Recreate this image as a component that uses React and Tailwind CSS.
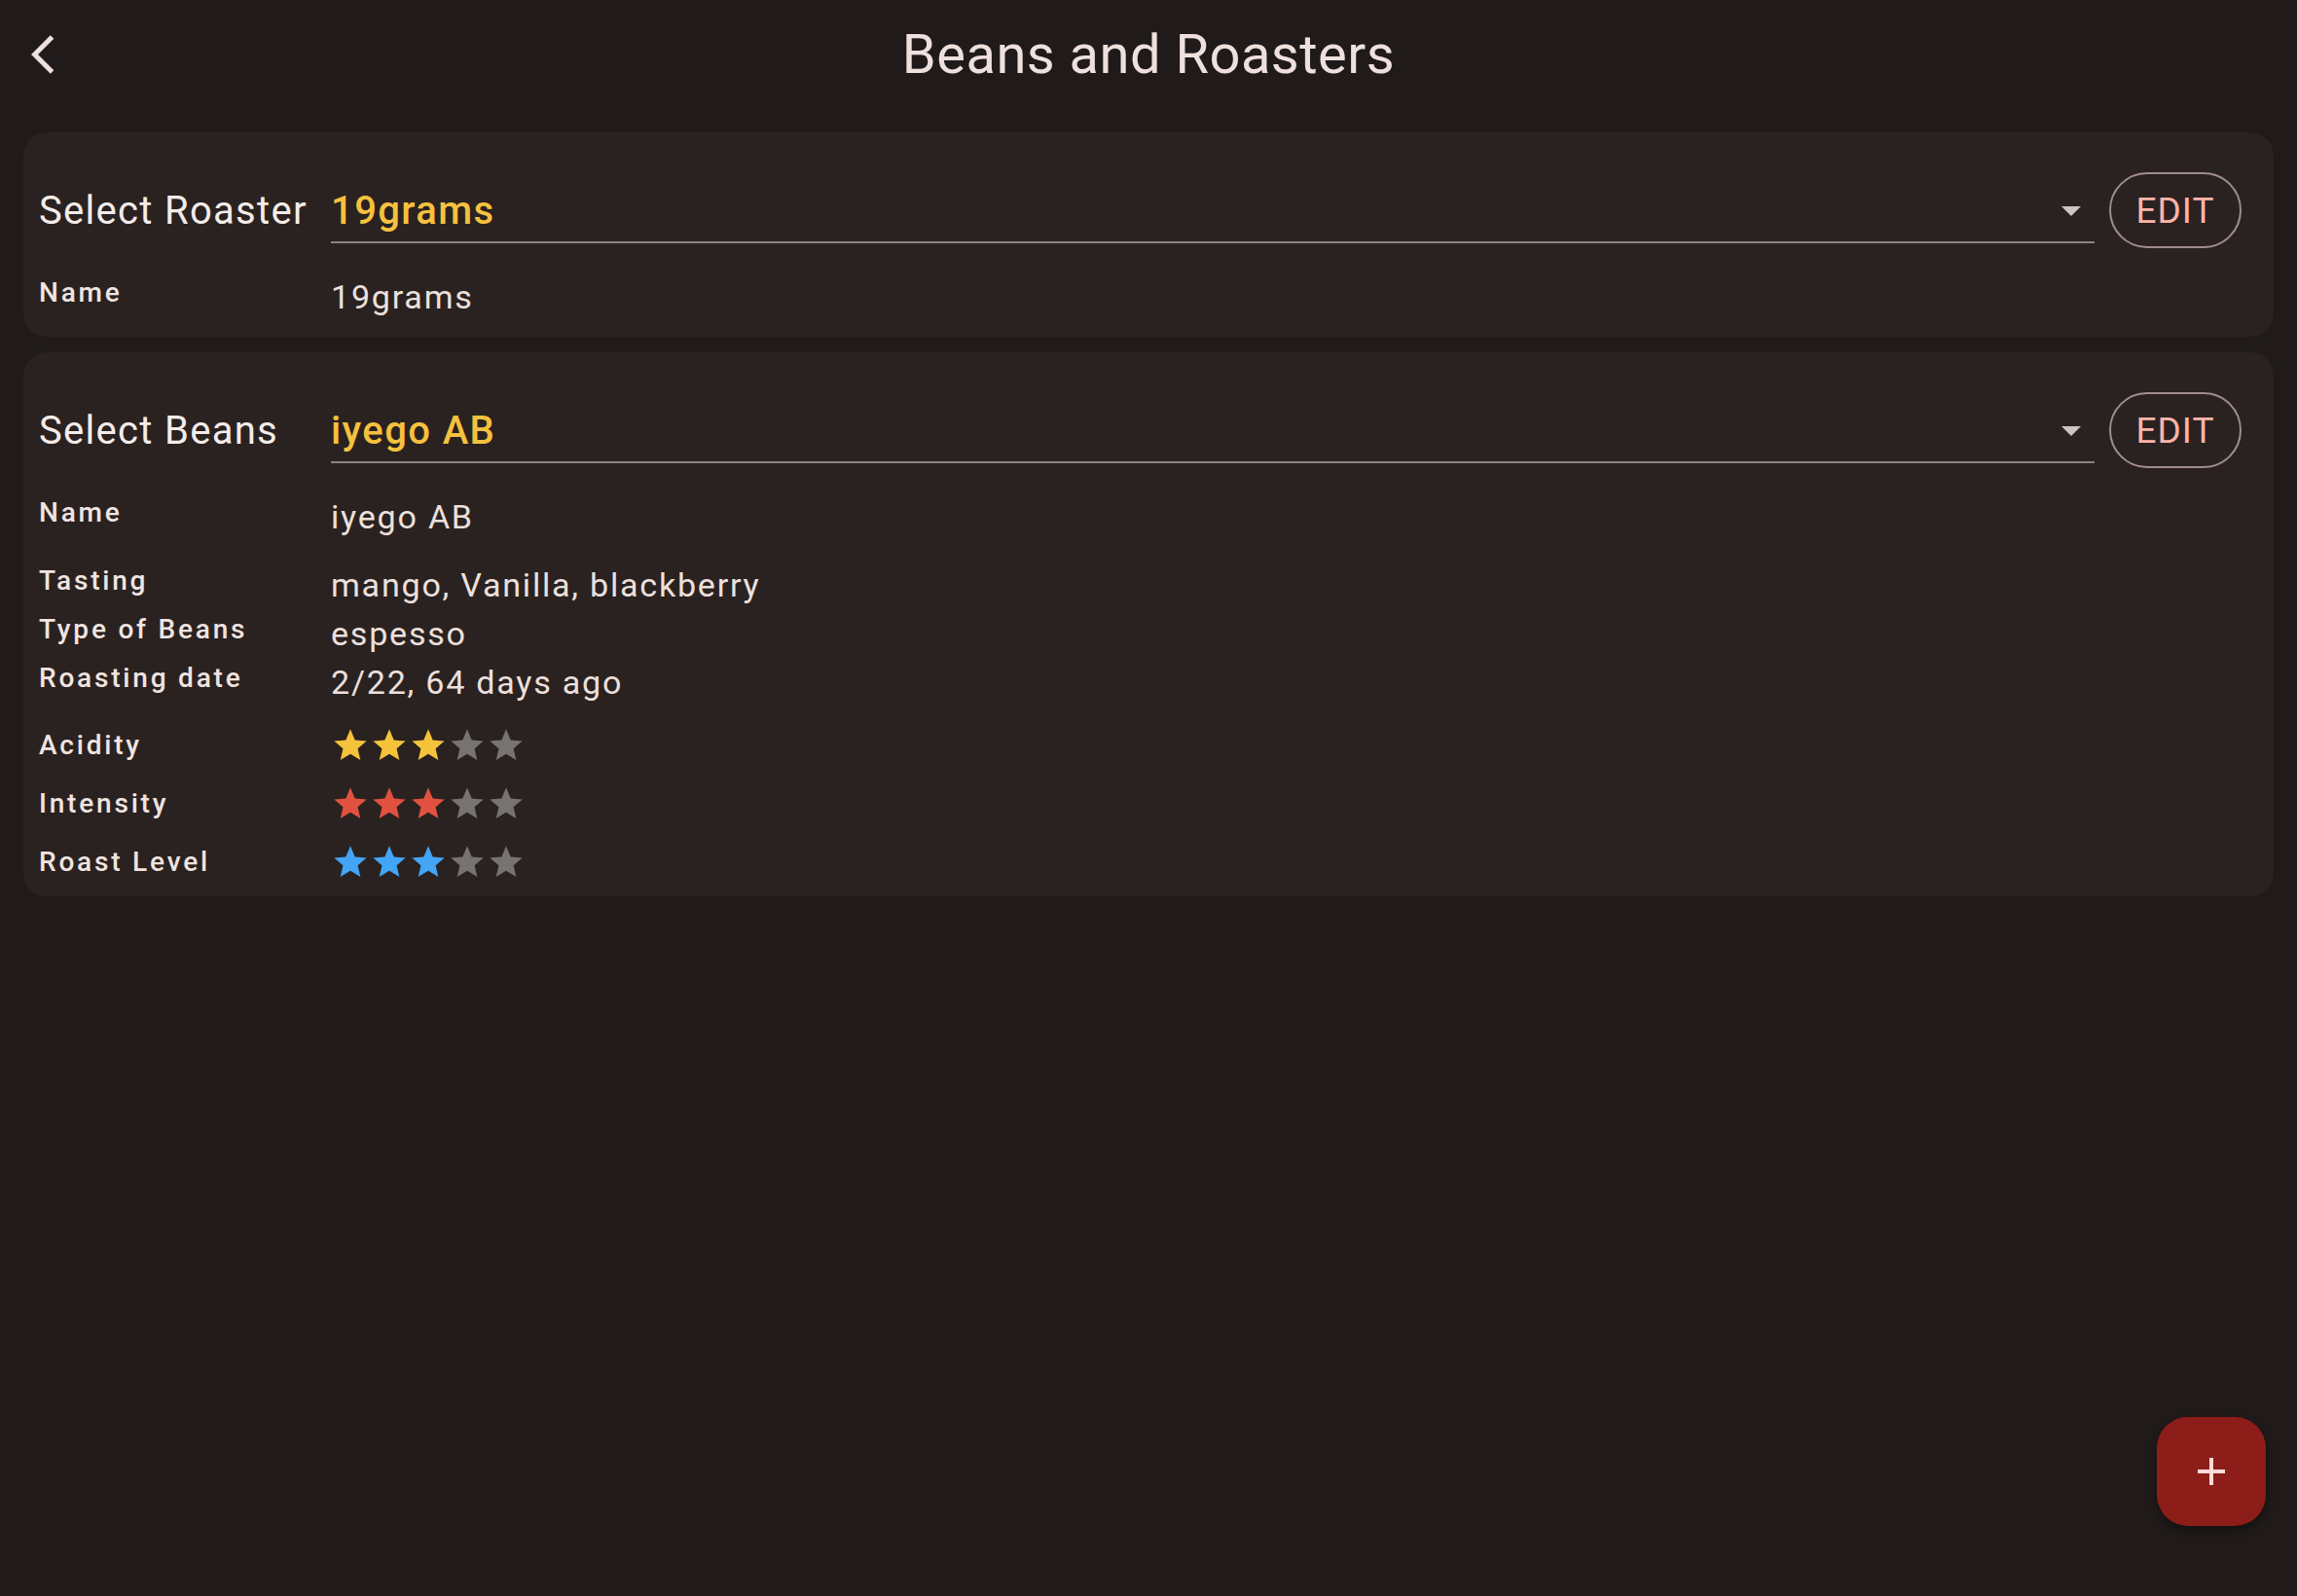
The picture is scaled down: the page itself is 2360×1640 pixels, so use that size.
import React from "react";

const STAR = "M12 17.27L18.18 21l-1.64-7.03L22 9.24l-7.19-.61L12 2 9.19 8.63 2 9.24l5.46 4.73L5.82 21z";

function Stars({ value, color }) {
  return (
    <div className="flex">
      {[0, 1, 2, 3, 4].map((i) => (
        <svg key={i} viewBox="0 0 24 24" className="w-[40px] h-[40px]" fill={i < value ? color : "#777372"}>
          <path d={STAR} />
        </svg>
      ))}
    </div>
  );
}

function SelectRow({ label, value }) {
  return (
    <div className="flex h-[78px]">
      <div className="w-[300px] shrink-0 flex items-center pt-[2px] text-[40px] tracking-[1.3px] text-[#f4ecea]">{label}</div>
      <div className="flex-1 h-[73px] pt-[9px] border-b-2 border-[#8a8482] flex items-center">
        <span className="flex-1 text-[40px] font-medium tracking-[1.4px] text-[#f5c13f]">{value}</span>
        <svg viewBox="0 0 24 24" className="w-[48px] h-[48px] -mt-[3px]" fill="#cbc5c3">
          <path d="M7 10l5 5 5-5z" />
        </svg>
      </div>
      <button className="ml-[15px] w-[136px] h-[78px] shrink-0 rounded-full border-2 border-[#a08d8a] pt-[2px] text-[37px] tracking-[1px] text-[#ffb4a9] flex items-center justify-center">
        EDIT
      </button>
    </div>
  );
}

function TextRow({ label, value }) {
  return (
    <div className="flex h-[50px] items-start">
      <div className="w-[300px] shrink-0 text-[28px] font-medium tracking-[2.8px] leading-[42px] text-[#f0e4e1]">{label}</div>
      <div className="text-[34px] tracking-[1.8px] leading-[50px] text-[#ede0dd]">{value}</div>
    </div>
  );
}

function StarRow({ label, value, color }) {
  return (
    <div className="flex h-[60px] items-center">
      <div className="w-[300px] shrink-0 text-[28px] font-medium tracking-[2.8px] text-[#f0e4e1]">{label}</div>
      <Stars value={value} color={color} />
    </div>
  );
}

export default function App() {
  return (
    <div className="relative min-h-screen bg-[#201a1a] font-['Roboto','Liberation_Sans',sans-serif]">
      <header className="grid grid-cols-[1fr_auto_1fr] items-center h-[112px]">
        <div className="pl-[32px] flex items-center">
          <svg viewBox="0 0 24 24" className="w-[48px] h-[48px]" fill="#ede0dd">
            <path d="M11.67 3.87 9.9 2.1 0 12l9.9 9.9 1.77-1.77L3.54 12z" />
          </svg>
        </div>
        <h1 className="text-[56px] leading-none tracking-[0.5px] text-[#ede0dd]">Beans and Roasters</h1>
        <div />
      </header>

      <main className="px-[24px] pt-[24px] flex flex-col gap-[16px]">
        <section className="bg-[#2a2220] rounded-3xl pl-[16px] pr-[33px] pt-[41px] pb-[16px]">
          <SelectRow label="Select Roaster" value="19grams" />
          <div className="mt-[25px]">
            <TextRow label="Name" value="19grams" />
          </div>
        </section>

        <section className="bg-[#2a2220] rounded-3xl pl-[16px] pr-[33px] pt-[41px] pb-[5px]">
          <SelectRow label="Select Beans" value="iyego AB" />
          <div className="mt-[25px]">
            <TextRow label="Name" value="iyego AB" />
          </div>
          <div className="mt-[20px] flex flex-col">
            <TextRow label="Tasting" value="mango, Vanilla, blackberry" />
            <TextRow label="Type of Beans" value="espesso" />
            <TextRow label="Roasting date" value="2/22, 64 days ago" />
          </div>
          <div className="mt-[10px] flex flex-col">
            <StarRow label="Acidity" value={3} color="#f5c33b" />
            <StarRow label="Intensity" value={3} color="#e2513f" />
            <StarRow label="Roast Level" value={3} color="#42a5f5" />
          </div>
        </section>
      </main>

      <button className="fixed right-[32px] bottom-[72px] w-[112px] h-[112px] rounded-[32px] bg-[#8c1d18] shadow-[0_4px_10px_rgba(0,0,0,0.35)] flex items-center justify-center">
        <svg viewBox="0 0 28 28" className="w-[28px] h-[28px]" fill="#ffdad6">
          <rect x="0" y="12" width="28" height="4" />
          <rect x="12" y="0" width="4" height="28" />
        </svg>
      </button>
    </div>
  );
}
